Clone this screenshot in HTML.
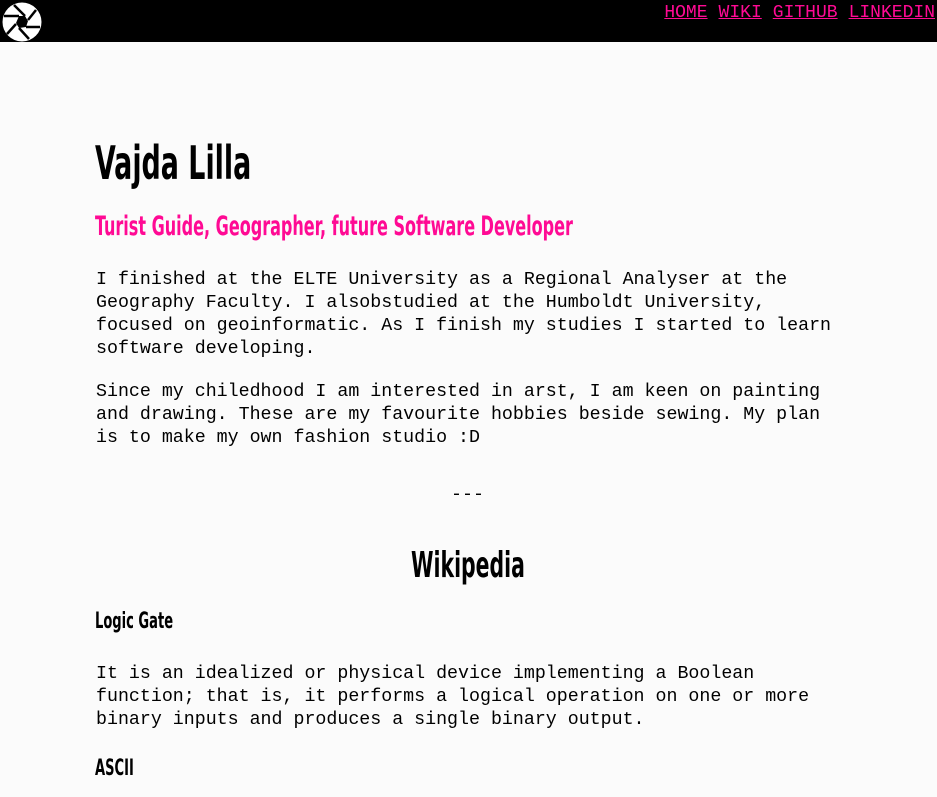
<!DOCTYPE html>
<html><head><meta charset="utf-8"><style>
body{margin:0;width:937px;height:797px;background:#fbfbfb;position:relative;overflow:hidden;font-family:"Liberation Mono",monospace;color:#000}
.hdr{position:absolute;left:0;top:0;width:937px;height:42px;background:#000}
.nav{position:absolute;right:2px;top:2px;font-size:18px;line-height:22px}
.nav a{color:#ff0a94;text-decoration:underline;margin-left:11px}
.a{position:absolute;white-space:nowrap}
.h{font-family:"Liberation Sans Narrow","DejaVu Sans Condensed","Liberation Sans",sans-serif;font-weight:bold;transform-origin:left top}
p.t{position:absolute;left:96px;margin:0;font-size:18.3px;line-height:23px;white-space:pre}
</style></head><body>
<div class="hdr">
<svg width="42" height="42" viewBox="0 0 42 42" style="position:absolute;left:1px;top:1px">
<circle cx="21" cy="21" r="19.5" fill="#fff"/>
<g stroke="#000" stroke-width="2.5" fill="none">
<path d="M13 4 L24 15"/><path d="M35 9 L27 19"/><path d="M39 26 L25 26"/>
<path d="M28 38 L18 27"/><path d="M6 33 L15 23"/><path d="M3 15 L18 15"/>
</g><path d="M18 15 L24 15 L27 20 L25 26 L18 27 L15 22Z" fill="#000"/>
</svg>
<div class="nav"><a>HOME</a><a>WIKI</a><a>GITHUB</a><a>LINKEDIN</a></div>
</div>
<div class="a h" style="left:95px;top:136px;font-size:46px;transform:scaleX(0.65)">Vajda Lilla</div>
<div class="a h" style="left:95px;top:211px;font-size:27px;color:#ff0a94;transform:scaleX(0.66)">Turist Guide, Geographer, future Software Developer</div>
<p class="t" style="top:269px">I finished at the ELTE University as a Regional Analyser at the
Geography Faculty. I alsobstudied at the Humboldt University,
focused on geoinformatic. As I finish my studies I started to learn
software developing.</p>
<p class="t" style="top:381px">Since my chiledhood I am interested in arst, I am keen on painting
and drawing. These are my favourite hobbies beside sewing. My plan
is to make my own fashion studio :D</p>
<div class="a" style="left:451px;top:485px;font-size:18.3px">---</div>
<div class="a h" style="left:411px;top:545px;font-size:36px;transform:scaleX(0.63)">Wikipedia</div>
<div class="a h" style="left:95px;top:609px;font-size:22px;transform:scaleX(0.66)">Logic Gate</div>
<p class="t" style="top:663px">It is an idealized or physical device implementing a Boolean
function; that is, it performs a logical operation on one or more
binary inputs and produces a single binary output.</p>
<div class="a h" style="left:95px;top:756px;font-size:22px;transform:scaleX(0.66)">ASCII</div>
</body></html>
